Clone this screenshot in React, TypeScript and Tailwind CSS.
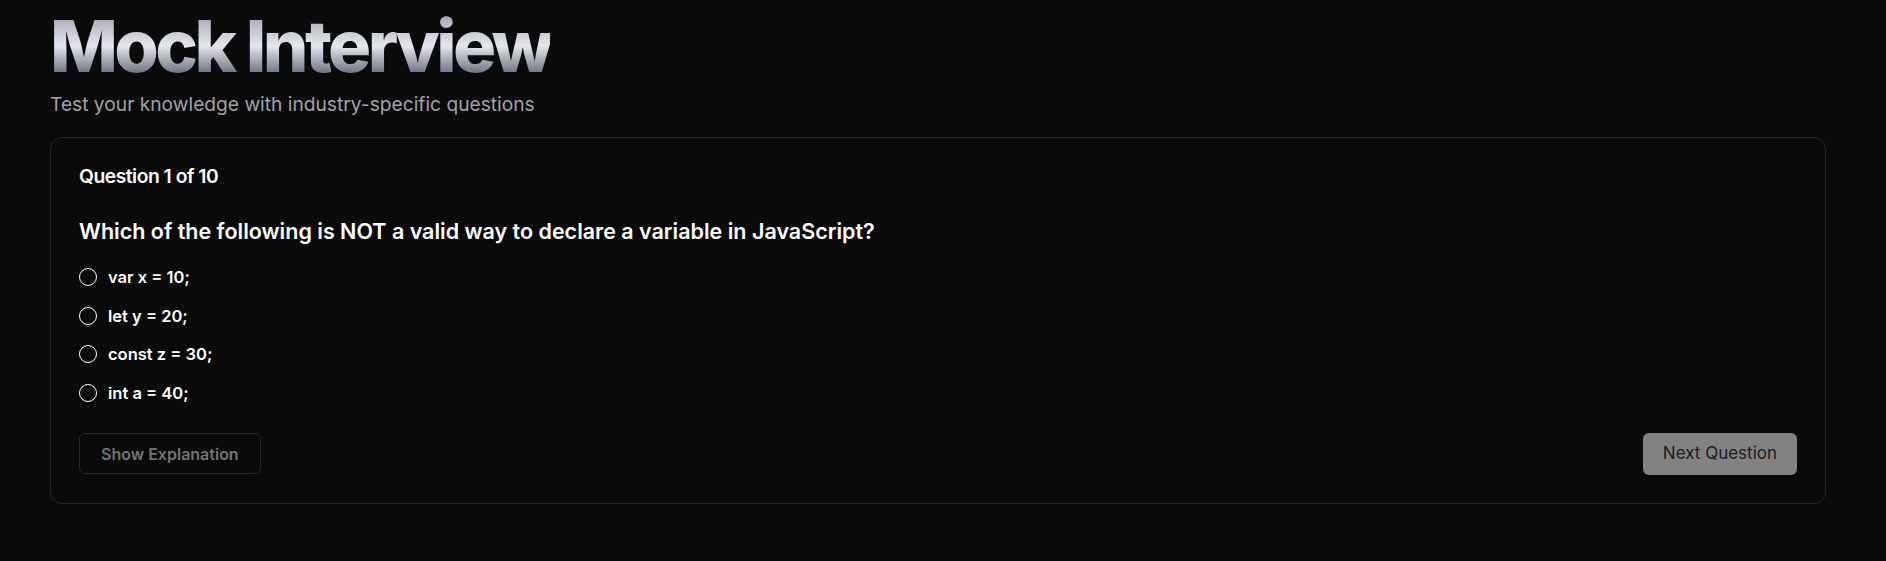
import React from "react";

const options = ["var x = 10;", "let y = 20;", "const z = 30;", "int a = 40;"];

export default function App() {
  return (
    <div
      className="min-h-screen w-full bg-[#0a0a0a] pl-[50px] pr-[60px] pt-[10px] pb-10"
      style={{ fontFamily: 'Inter, "Noto Sans", sans-serif' }}
    >
      <h1 className="bg-gradient-to-b from-gray-400 via-gray-200 to-gray-600 bg-clip-text text-transparent text-[72px] leading-none font-extrabold tracking-tighter w-fit">
        Mock Interview
      </h1>
      <p className="mt-2 text-[19.2px] leading-7 text-[#a1a1aa]">
        Test your knowledge with industry-specific questions
      </p>

      <div className="mt-[19px] w-[1776px] rounded-xl border border-[#27272a] bg-[#0a0a0a] px-7 pt-[29px] pb-7 text-white">
        <h2 className="text-[19.3px] font-semibold leading-none tracking-tight">Question 1 of 10</h2>
        <p className="mt-[31px] text-[21.5px] font-semibold leading-7">
          Which of the following is NOT a valid way to declare a variable in JavaScript?
        </p>
        <div className="mt-[20px] flex flex-col gap-[14.5px]">
          {options.map((o) => (
            <label key={o} className="flex h-6 items-center gap-[11px]">
              <span className="h-[18px] w-[18px] shrink-0 rounded-full border-[1.5px] border-white" />
              <span className="text-[16.5px] font-semibold leading-6">{o}</span>
            </label>
          ))}
        </div>
        <div className="mt-[28px] flex items-center justify-between">
          <button className="h-[41px] rounded-md border border-[#27272a] px-[21px] text-base font-semibold text-[#737373]">
            Show Explanation
          </button>
          <button className="h-[42px] rounded-md bg-[#828282] px-5 text-[17px] font-normal text-[#1a1a1a]">
            Next Question
          </button>
        </div>
      </div>
    </div>
  );
}
